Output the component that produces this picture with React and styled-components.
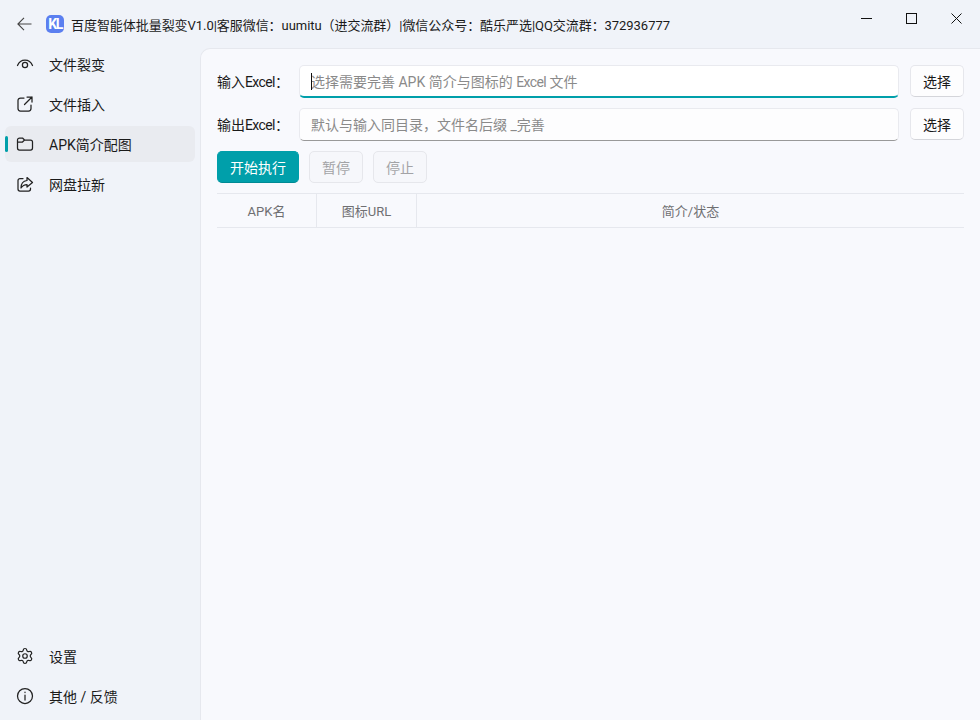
import React from "react"
import styled, { createGlobalStyle } from "styled-components"
import { Settings } from "lucide-react"

const GlobalStyle = createGlobalStyle`
  html, body {
    margin: 0;
    padding: 0;
    height: 100%;
    background: #f0f3f9;
  }
  * {
    box-sizing: border-box;
  }
  body {
    font-family: Roboto, "Noto Sans CJK SC", sans-serif;
    font-size: 14px;
    color: #1a1a1a;
  }
`

const Page = styled.div`
  width: 980px;
  height: 720px;
  display: grid;
  grid-template-rows: 46px 1fr;
  grid-template-columns: 200px 1fr;
  overflow: hidden;
`

const TitleBar = styled.div`
  grid-column: 1 / 3;
  display: flex;
  align-items: center;
  padding: 2px 1px 0 17px;
`

const BackButton = styled.div`
  display: flex;
  width: 29px;
  color: #444;
`

const Logo = styled.div`
  width: 18px;
  height: 18px;
  border-radius: 5px;
  background: #5b7ff0;
  color: #fff;
  font-size: 14px;
  font-weight: 700;
  line-height: 18px;
  letter-spacing: -1.5px;
  text-align: center;
  margin-right: 7px;
`

const Title = styled.div`
  font-size: 13px;
  letter-spacing: -0.05px;
  white-space: nowrap;
  flex: 1;
`

const WindowControls = styled.div`
  display: flex;
  align-self: flex-start;
  margin-top: 0;
`

const WindowButton = styled.div`
  width: 45px;
  height: 32px;
  display: flex;
  align-items: center;
  justify-content: center;
`

const Sidebar = styled.nav`
  display: flex;
  flex-direction: column;
  gap: 4px;
  padding: 0 5px 6px;
`

const NavSpacer = styled.div`
  flex: 1;
`

const NavItem = styled.div`
  position: relative;
  height: 36px;
  display: flex;
  align-items: center;
  gap: 15px;
  padding-left: 11px;
  border-radius: 6px;
  background: ${p => (p.$active ? "#e9ebf0" : "transparent")};
  ${p =>
    p.$active &&
    `&::before {
      content: "";
      position: absolute;
      left: 0;
      top: 10px;
      width: 3px;
      height: 16px;
      border-radius: 2px;
      background: #009faa;
    }`}
`

const NavIcon = styled.svg`
  width: 18px;
  height: 18px;
  flex: none;
  fill: none;
  stroke: #222;
  stroke-width: 1.25;
  stroke-linecap: round;
  stroke-linejoin: round;
`

const Panel = styled.main`
  margin-top: 2px;
  background: #f8f9fd;
  border-top: 1px solid #e6e8ee;
  border-left: 1px solid #e6e8ee;
  border-top-left-radius: 10px;
  padding: 16px 16px 0;
  display: flex;
  flex-direction: column;
`

const FieldRow = styled.div`
  display: flex;
  align-items: flex-start;
  margin-bottom: 10px;
`

const FieldLabel = styled.label`
  width: 82px;
  height: 33px;
  flex: none;
  line-height: 35px;
`

const Latin = styled.span`
  letter-spacing: -0.6px;
`

const TextInput = styled.div`
  position: relative;
  flex: 1;
  height: 33px;
  padding-left: 11px;
  margin-right: 11px;
  line-height: 33px;
  white-space: pre;
  background: ${p => (p.$focused ? "#fff" : "#fdfdfe")};
  border: 1px solid #e9eaef;
  border-bottom: ${p => (p.$focused ? "2px solid #009faa" : "1px solid #999")};
  border-radius: 5px;
  color: #8a8a8a;
  font-size: 14px;
`

const Caret = styled.span`
  position: absolute;
  left: 11px;
  top: 7px;
  width: 1px;
  height: 17px;
  background: #111;
`

const Button = styled.button`
  height: 32px;
  padding: 0;
  width: ${p => p.$width || 54}px;
  flex: none;
  font: inherit;
  font-size: 14px;
  border-radius: 5px;
  border: 1px solid ${p => (p.$primary ? "#009faa" : "#e6e7ec")};
  border-bottom-color: ${p => (p.$primary ? "#008a94" : p.disabled ? "#e6e7ec" : "#d4d5da")};
  background: ${p => (p.$primary ? "#009faa" : p.disabled ? "#f6f7fb" : "#fdfdfe")};
  color: ${p => (p.$primary ? "#fff" : p.disabled ? "#a3a3a6" : "#1a1a1a")};
`

const ActionRow = styled.div`
  display: flex;
  gap: 10px;
  margin-bottom: 10px;
`

const TableHead = styled.div`
  display: grid;
  grid-template-columns: 99px 100px 1fr;
  height: 35px;
  border-top: 1px solid #e6e8ee;
  border-bottom: 1px solid #e6e8ee;
`

const HeadCell = styled.div`
  display: flex;
  align-items: center;
  justify-content: center;
  font-size: 13px;
  color: #6f6f72;
  & + & {
    border-left: 1px solid #e6e8ee;
  }
`

const GearIcon = styled(Settings)`
  width: 18px;
  height: 18px;
  flex: none;
  color: #222;
`

const navTop = [
  {
    label: "文件裂变",
    icon: (
      <>
        <path d="M1.500 10.500C3 6.800 5.800 5 9 5s6 1.800 7.500 5.500" />
        <circle cx="9" cy="10" r="2.600" />
      </>
    ),
  },
  {
    label: "文件插入",
    icon: (
      <>
        <path d="M8 3H4.500A2.500 2.500 0 0 0 2 5.500V13.500A2.500 2.500 0 0 0 4.500 16H12.500A2.500 2.500 0 0 0 15 13.500V10" />
        <path d="M8.500 9.500L16 2M11 2H16V7" />
      </>
    ),
  },
  {
    label: "APK简介配图",
    active: true,
    icon: (
      <path d="M1.500 5A2 2 0 0 1 3.500 3H6.500L8.500 5H14.500A2 2 0 0 1 16.500 7V13A2 2 0 0 1 14.500 15H3.500A2 2 0 0 1 1.500 13Z M1.500 7H6.500L8.500 5" />
    ),
  },
  {
    label: "网盘拉新",
    icon: (
      <>
        <path d="M7 3.500H4A2 2 0 0 0 2 5.500V14A2 2 0 0 0 4 16H12.500A2 2 0 0 0 14.500 14V13" />
        <path d="M11 2.500L16.500 7.500L11 12V9.500C8.500 9.500 6.500 10.500 5 13C5 9 7 6 11 5.500Z" />
      </>
    ),
  },
]

const navBottom = [
  {
    label: "设置",
    gear: true,
  },
  {
    label: "其他 / 反馈",
    icon: (
      <>
        <circle cx="9" cy="9" r="7.500" />
        <path d="M9 8V13M9 5.200V5.600" />
      </>
    ),
  },
]

const NavEntry = ({ item }) => (
  <NavItem $active={item.active}>
    {item.gear ? <GearIcon strokeWidth={1.6} /> : <NavIcon viewBox="0 0 18 18">{item.icon}</NavIcon>}
    {item.label}
  </NavItem>
)

const App = () => (
  <Page>
    <GlobalStyle />
    <TitleBar>
      <BackButton>
        <svg width="15" height="14" viewBox="0 0 15 14" fill="none" stroke="currentColor" strokeWidth="1.1">
          <path d="M14.500 7H1M7 .8L.9 7L7 13.200" />
        </svg>
      </BackButton>
      <Logo>KL</Logo>
      <Title>百度智能体批量裂变V1.0|客服微信：uumitu（进交流群）|微信公众号：酷乐严选|QQ交流群：372936777</Title>
      <WindowControls>
        <WindowButton>
          <svg width="11" height="11" viewBox="0 0 11 11" stroke="#111" fill="none"><path d="M0 5.500H11" /></svg>
        </WindowButton>
        <WindowButton>
          <svg width="11" height="11" viewBox="0 0 11 11" stroke="#111" fill="none"><rect x=".5" y=".5" width="10" height="10" /></svg>
        </WindowButton>
        <WindowButton>
          <svg width="11" height="11" viewBox="0 0 11 11" stroke="#111" fill="none"><path d="M.5 .5L10.500 10.500M10.500 .5L.5 10.500" /></svg>
        </WindowButton>
      </WindowControls>
    </TitleBar>
    <Sidebar>
      {navTop.map(item => (
        <NavEntry key={item.label} item={item} />
      ))}
      <NavSpacer />
      {navBottom.map(item => (
        <NavEntry key={item.label} item={item} />
      ))}
    </Sidebar>
    <Panel>
      <FieldRow>
        <FieldLabel>输入<Latin>Excel</Latin>：</FieldLabel>
        <TextInput $focused>
          <Caret />
          选择需要完善 APK 简介与图标的 <Latin>Excel</Latin> 文件
        </TextInput>
        <Button>选择</Button>
      </FieldRow>
      <FieldRow>
        <FieldLabel>输出<Latin>Excel</Latin>：</FieldLabel>
        <TextInput>默认与输入同目录，文件名后缀 _完善</TextInput>
        <Button>选择</Button>
      </FieldRow>
      <ActionRow>
        <Button $primary $width={82}>开始执行</Button>
        <Button disabled>暂停</Button>
        <Button disabled>停止</Button>
      </ActionRow>
      <TableHead>
        <HeadCell>APK名</HeadCell>
        <HeadCell>图标URL</HeadCell>
        <HeadCell>简介/状态</HeadCell>
      </TableHead>
    </Panel>
  </Page>
)

export default App
